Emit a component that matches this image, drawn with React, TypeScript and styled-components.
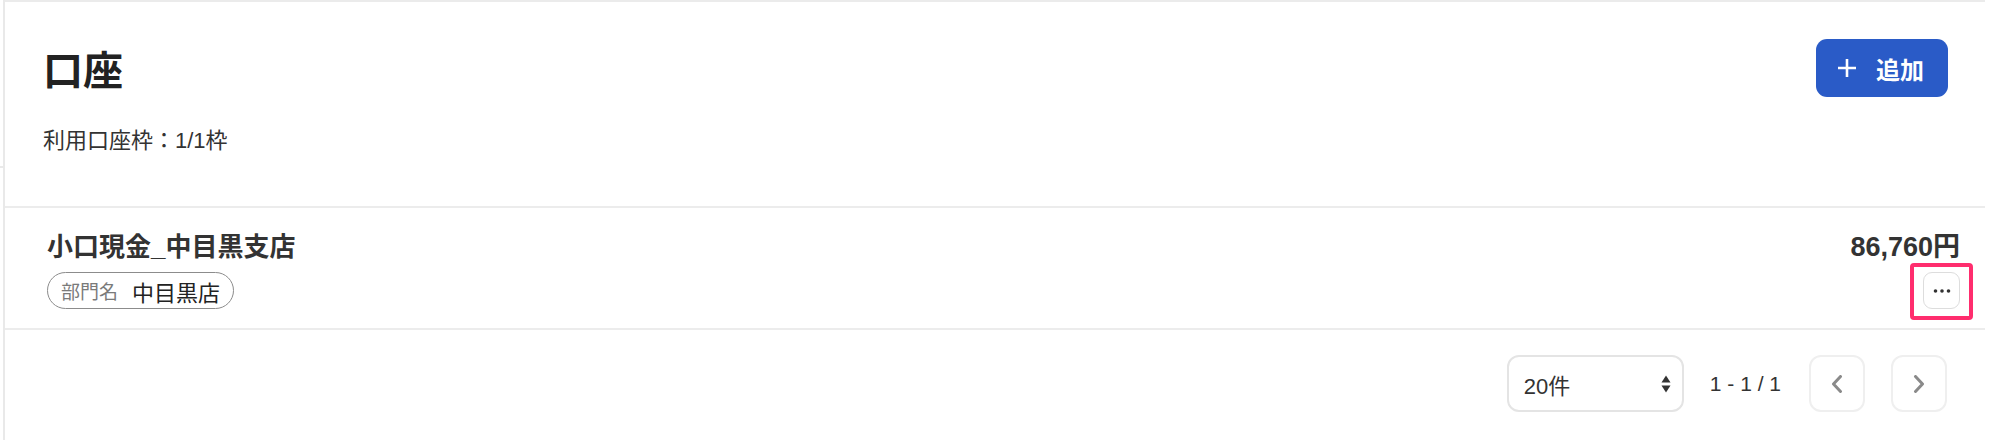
import React from "react";
import styled, { createGlobalStyle } from "styled-components";

const Global = createGlobalStyle`
  html, body { margin: 0; padding: 0; background: #ffffff; }
  body {
    font-family: "Liberation Sans", "Noto Sans CJK JP", sans-serif;
    color: #333333;
  }
  * { box-sizing: border-box; }
`;

const Page = styled.div`
  display: flex;
  width: 1999px;
  height: 440px;
  overflow: hidden;
`;

const Side = styled.div`
  width: 5px;
  flex: none;
  border-right: 2px solid #e9e9e9;
`;

const SideItem = styled.div`
  height: 168px;
  border-bottom: 2px solid #e9e9e9;
`;

const Card = styled.section`
  width: 1980px;
  flex: none;
  border-top: 2px solid #ebebeb;
  background: #ffffff;
`;

const Header = styled.header`
  padding: 37px 37px 49px 38px;
  border-bottom: 2px solid #ececec;
`;

const HeaderRow = styled.div`
  display: flex;
  align-items: center;
  justify-content: space-between;
  height: 58px;
`;

const Title = styled.h1`
  margin: 0;
  font-family: "Noto Sans CJK JP", sans-serif;
  font-size: 40px;
  line-height: 48px;
  font-weight: 700;
  color: #222222;
`;

const AddButton = styled.button`
  display: inline-flex;
  align-items: center;
  gap: 19px;
  height: 58px;
  padding: 0 24px 0 21px;
  border: none;
  border-radius: 11px;
  background: #2a5bc7;
  color: #ffffff;
  font-family: "Noto Sans CJK JP", sans-serif;
  font-size: 24px;
  font-weight: 700;
  cursor: pointer;
`;

const Quota = styled.p`
  margin: 28px 0 0;
  font-size: 22px;
  line-height: 32px;
  color: #333333;
`;

const Row = styled.div`
  display: flex;
  justify-content: space-between;
  padding: 22px 25px 19px 42px;
  border-bottom: 2px solid #ececec;
`;

const Col = styled.div<{ $end?: boolean }>`
  display: flex;
  flex-direction: column;
  align-items: ${(p) => (p.$end ? "flex-end" : "flex-start")};
  gap: 8px;
`;

const AccountName = styled.div`
  font-size: 26px;
  line-height: 34px;
  font-weight: 700;
  color: #333333;
`;

const Amount = styled(AccountName)`
  font-size: 27px;
  color: #333333;
`;

const Badge = styled.div`
  display: inline-flex;
  align-items: center;
  gap: 14px;
  height: 37px;
  padding: 0 13px 0 13px;
  border: 1.5px solid #8c8c8c;
  border-radius: 19px;
`;

const BadgeLabel = styled.span`
  font-size: 19px;
  color: #7a7a7a;
`;

const BadgeValue = styled.span`
  font-size: 22px;
  color: #222222;
`;

const Highlight = styled.div`
  position: relative;
  display: flex;
  &::after {
    content: "";
    position: absolute;
    left: -13px;
    right: -13px;
    top: -9px;
    bottom: -11px;
    border: 4px solid #ff2d6e;
    border-radius: 4px;
    pointer-events: none;
  }
`;

const MoreButton = styled.button`
  display: flex;
  align-items: center;
  justify-content: center;
  width: 37px;
  height: 37px;
  padding: 0;
  border: 1.5px solid #dddddd;
  border-radius: 9px;
  background: #ffffff;
  cursor: pointer;
`;

const Pager = styled.div`
  display: flex;
  justify-content: flex-end;
  align-items: center;
  gap: 26px;
  padding: 25px 38px 0 0;
`;

const Select = styled.div`
  display: flex;
  align-items: center;
  justify-content: space-between;
  width: 177px;
  height: 57px;
  padding: 0 11px 0 15px;
  border: 2px solid #e4e4e4;
  border-radius: 12px;
  font-size: 22px;
  color: #333333;
`;

const RangeText = styled.span`
  font-size: 21px;
  color: #333333;
  margin-right: 2px;
`;

const NavButton = styled.button`
  display: flex;
  align-items: center;
  justify-content: center;
  width: 56px;
  height: 57px;
  padding: 0;
  border: 2px solid #efefef;
  border-radius: 12px;
  background: #ffffff;
  cursor: pointer;
`;

const NavGroup = styled.div`
  display: flex;
  gap: 26px;
`;

const PlusIcon = () => (
  <svg width="20" height="20" viewBox="0 0 20 20">
    <path d="M10 1v18M1 10h18" stroke="#ffffff" strokeWidth="2.6" />
  </svg>
);

const DotsIcon = () => (
  <svg width="18" height="4" viewBox="0 0 18 4">
    <circle cx="2.5" cy="2" r="1.8" fill="#333" />
    <circle cx="9" cy="2" r="1.8" fill="#333" />
    <circle cx="15.5" cy="2" r="1.8" fill="#333" />
  </svg>
);

const UpDownIcon = () => (
  <svg width="10" height="18" viewBox="0 0 10 18">
    <path d="M5 0.5L9.5 7.5H0.5Z" fill="#333" />
    <path d="M5 17.5L9.5 10.5H0.5Z" fill="#333" />
  </svg>
);

const Chevron = ({ dir }: { dir: "left" | "right" }) => (
  <svg width="12" height="18" viewBox="0 0 12 18">
    <path
      d={dir === "left" ? "M9.5 1.5L2.5 9l7 7.5" : "M2.5 1.5L9.5 9l-7 7.5"}
      fill="none"
      stroke="#8a8a8a"
      strokeWidth="3"
      strokeLinecap="round"
      strokeLinejoin="round"
    />
  </svg>
);

export default function App() {
  return (
    <>
      <Global />
      <Page>
        <Side>
          <SideItem />
        </Side>
        <Card>
          <Header>
            <HeaderRow>
              <Title>口座</Title>
              <AddButton>
                <PlusIcon />
                追加
              </AddButton>
            </HeaderRow>
            <Quota>利用口座枠：1/1枠</Quota>
          </Header>
          <Row>
            <Col>
              <AccountName>小口現金_中目黒支店</AccountName>
              <Badge>
                <BadgeLabel>部門名</BadgeLabel>
                <BadgeValue>中目黒店</BadgeValue>
              </Badge>
            </Col>
            <Col $end>
              <Amount>86,760円</Amount>
              <Highlight>
                <MoreButton aria-label="more">
                  <DotsIcon />
                </MoreButton>
              </Highlight>
            </Col>
          </Row>
          <Pager>
            <Select>
              <span>20件</span>
              <UpDownIcon />
            </Select>
            <RangeText>1 - 1 / 1</RangeText>
            <NavGroup>
              <NavButton aria-label="prev">
                <Chevron dir="left" />
              </NavButton>
              <NavButton aria-label="next">
                <Chevron dir="right" />
              </NavButton>
            </NavGroup>
          </Pager>
        </Card>
      </Page>
    </>
  );
}
